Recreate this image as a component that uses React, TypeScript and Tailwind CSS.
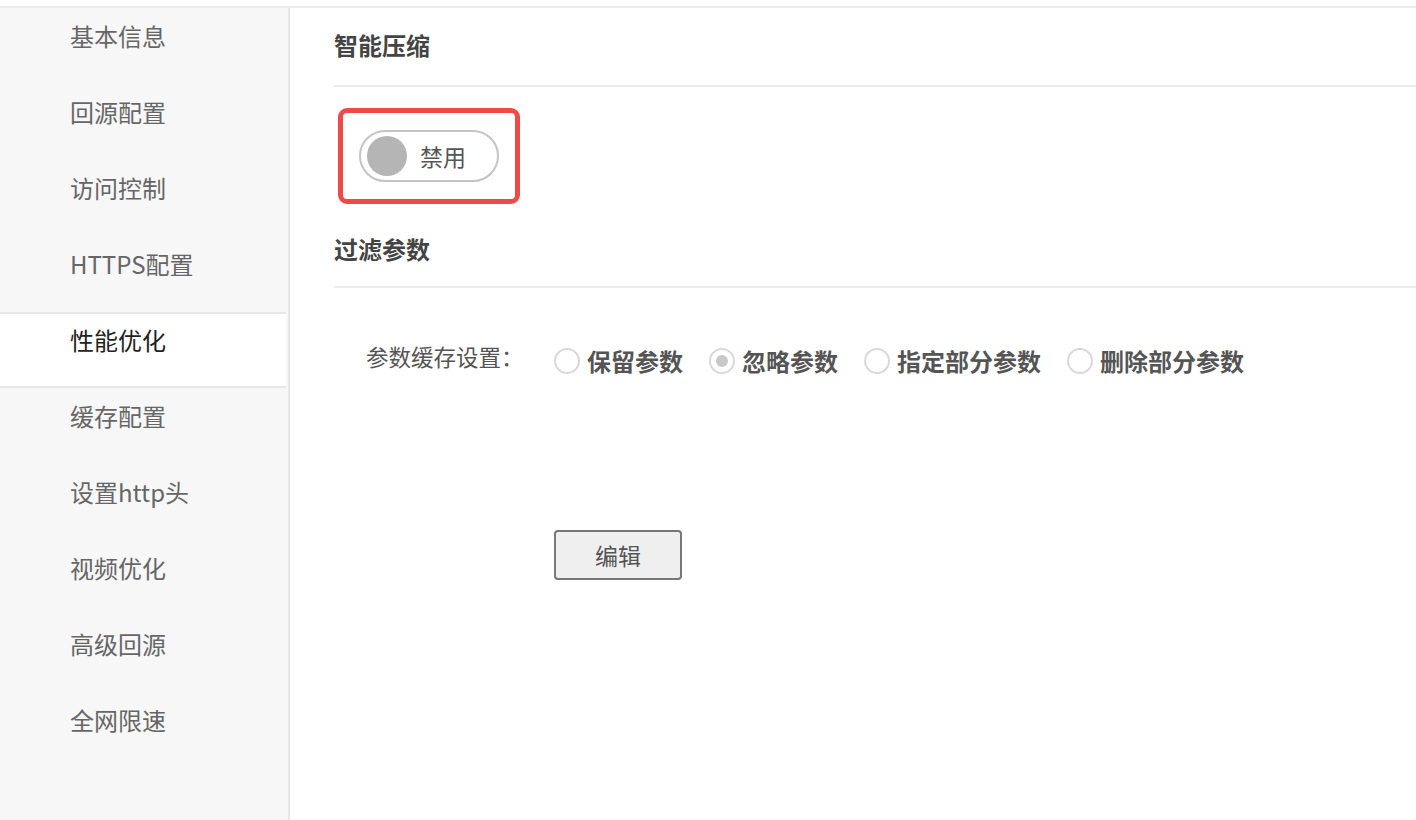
const menu = ["基本信息", "回源配置", "访问控制", "HTTPS配置", "性能优化", "缓存配置", "设置http头", "视频优化", "高级回源", "全网限速"];
const options = [
  { label: "保留参数", checked: false },
  { label: "忽略参数", checked: true },
  { label: "指定部分参数", checked: false },
  { label: "删除部分参数", checked: false },
];

const font = { fontFamily: '"Noto Sans CJK SC", "Noto Sans", sans-serif' };

function Radio({ label, checked }: { label: string; checked: boolean }) {
  return (
    <div className="flex items-center gap-[7px]">
      <span className="flex h-[26px] w-[26px] items-center justify-center rounded-full border-2 border-[#d9d9d9] bg-white">
        {checked && <span className="h-[12px] w-[12px] rounded-full bg-[#c8c8c8]" />}
      </span>
      <span className="text-[24px] font-bold leading-none text-[#555]">{label}</span>
    </div>
  );
}

export default function App() {
  return (
    <div className="h-[820px] w-[1416px] overflow-hidden bg-white" style={font}>
      <div className="h-[6px] bg-white" />
      <div className="flex h-[814px] border-t-2 border-[#ebebeb]">
        {/* sidebar */}
        <div className="w-[290px] shrink-0 border-r-2 border-[#e6e6e6] bg-[#f7f7f7]">
          <div className="flex flex-col pt-[3px]">
            {menu.map((m, i) => {
              const active = m === "性能优化";
              return (
                <div
                  key={m}
                  className={
                    "h-[76px] pl-[70px] text-[24px] leading-[36px] " +
                    (active
                      ? "mr-[2px] border-y-2 border-[#e8e8e8] bg-white pt-[8px] text-[#222]"
                      : "pt-[10px] text-[#666]") +
                    (i === 0 ? " -mt-[3px]" : "")
                  }
                >
                  {m}
                </div>
              );
            })}
          </div>
        </div>

        {/* main */}
        <div className="flex-1 pl-[44px]">
          <div className="flex h-[79px] items-center border-b-2 border-[#ebebeb] pb-[4px] text-[24px] font-bold text-[#444]">
            智能压缩
          </div>
          <div className="pt-[21px] pl-[4px]">
            <div className="inline-flex h-[96px] w-[182px] items-center justify-center rounded-[9px] border-[5px] border-[#ef4a4a]">
              <div className="flex h-[52px] w-[140px] items-center rounded-full border-2 border-[#c4c4c4] bg-white pl-[6px]">
                <span className="h-[40px] w-[40px] rounded-full bg-[#b5b5b5]" />
                <span className="ml-[13px] text-[23px] text-[#555]">禁用</span>
              </div>
            </div>
          </div>
          <div className="flex h-[84px] items-center border-b-2 border-[#ebebeb] pt-[7px] text-[24px] font-bold text-[#444]">
            过滤参数
          </div>
          <div className="flex items-center pt-[52px] pl-[32px]">
            <span className="w-[188px] pb-[4px] text-[22.5px] text-[#555]">参数缓存设置：</span>
            <div className="flex items-center gap-[26px] pt-[4px]">
              {options.map((o) => (
                <Radio key={o.label} label={o.label} checked={o.checked} />
              ))}
            </div>
          </div>
          <div className="pt-[152px] pl-[220px]">
            <button className="h-[50px] w-[128px] rounded-[4px] border-2 border-[#777] bg-[#efefef] text-[23px] text-[#555]">
              编辑
            </button>
          </div>
        </div>
      </div>
    </div>
  );
}
